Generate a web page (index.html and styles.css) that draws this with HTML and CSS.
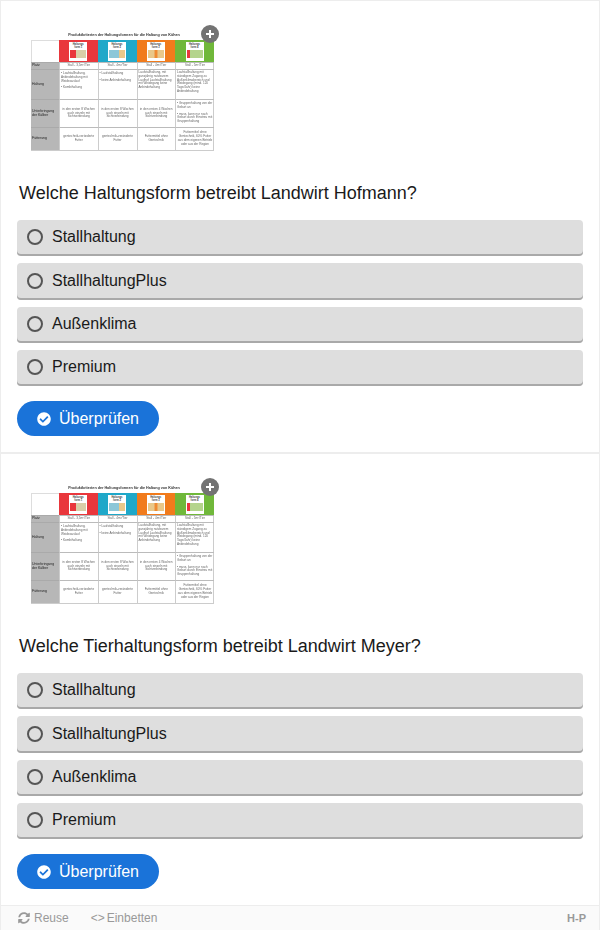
FILE: index.html
```html
<!DOCTYPE html>
<html lang="de">
<head>
    <meta charset="UTF-8">
    <title>Haltungsform Quiz</title>
    <link rel="stylesheet" href="styles.css">
</head>
<body>
    <div class="content">
        <div class="quiz">
            <div class="thumb">
                <div class="thumb-plus"><svg viewBox="0 0 10 10" width="10" height="10"><path d="M4 1h2v3h3v2H6v3H4V6H1V4h3z" fill="#fff"/></svg></div>
                <div class="thumb-title">Produktkriterien der Haltungsformen für die Haltung von Kühen</div>
                <div class="table">
                    <div class="cell head-blank"></div>
                    <div class="cell head red"><div class="logo"><b>Haltungs<br>form 1</b><i class="s1"></i></div></div>
                    <div class="cell head teal"><div class="logo"><b>Haltungs<br>form 2</b><i class="s2"></i></div></div>
                    <div class="cell head orange"><div class="logo"><b>Haltungs<br>form 3</b><i class="s3"></i></div></div>
                    <div class="cell head green"><div class="logo"><b>Haltungs<br>form 4</b><i class="s4"></i></div></div>

                    <div class="cell label">Platz</div>
                    <div class="cell mid">Stall - 3,5m²/Tier</div>
                    <div class="cell mid">Stall - 4m²/Tier</div>
                    <div class="cell mid">Stall - 4m²/Tier</div>
                    <div class="cell mid">Stall - 5m²/Tier</div>

                    <div class="cell label">Haltung</div>
                    <div class="cell"><p>• Laufstallhaltung, Anbindehaltung mit Weideauslauf</p><p>• Kombihaltung</p></div>
                    <div class="cell"><p>• Laufstallhaltung</p><p>• keine Anbindehaltung</p></div>
                    <div class="cell">Laufstallhaltung, mit ganzjährig nutzbarem Laufhof Laufstallhaltung mit Weidegang keine Anbindehaltung</div>
                    <div class="cell">Laufstallhaltung mit ständigem Zugang zu Außenklimabereich und Weidegang (mind. 120 Tage/Jahr) keine Anbindehaltung</div>

                    <div class="cell label">Unterbringung<br>der Kälber</div>
                    <div class="cell mid">in den ersten 8 Wochen auch einzeln mit Sichtverbindung</div>
                    <div class="cell mid">in den ersten 8 Wochen auch einzeln mit Sichtverbindung</div>
                    <div class="cell mid">in den ersten 4 Wochen auch einzeln mit Sichtverbindung</div>
                    <div class="cell"><p>• Gruppenhaltung von der Geburt an</p><p>• muss, kann nur nach Geburt durch Einstreu mit Gruppenhaltung</p></div>

                    <div class="cell label">Fütterung</div>
                    <div class="cell mid">gentechnik-veränderte Futter</div>
                    <div class="cell mid">gentechnik-veränderte Futter</div>
                    <div class="cell mid">Futtermittel ohne Gentechnik</div>
                    <div class="cell mid">Futtermittel ohne Gentechnik, 60% Futter aus dem eigenen Betrieb oder aus der Region</div>
                </div>
            </div>
            <div class="question">Welche Haltungsform betreibt Landwirt Hofmann?</div>
            <div class="answers">
                <div class="answer"><span class="radio"></span>Stallhaltung</div>
                <div class="answer"><span class="radio"></span>StallhaltungPlus</div>
                <div class="answer"><span class="radio"></span>Außenklima</div>
                <div class="answer"><span class="radio"></span>Premium</div>
            </div>
            <div class="check-btn">
                <svg class="check-icon" viewBox="0 0 512 512"><path d="M504 256c0 137-111 248-248 248S8 393 8 256 119 8 256 8s248 111 248 248zM227 387l184-184c6-6 6-16 0-23l-23-23c-6-6-16-6-23 0L216 307l-70-70c-6-6-16-6-23 0l-23 23c-6 6-6 16 0 23l104 104c7 6 17 6 23 0z" fill="#fff"/></svg>
                Überprüfen
            </div>
        </div>

        <div class="quiz">
            <div class="thumb">
                <div class="thumb-plus"><svg viewBox="0 0 10 10" width="10" height="10"><path d="M4 1h2v3h3v2H6v3H4V6H1V4h3z" fill="#fff"/></svg></div>
                <div class="thumb-title">Produktkriterien der Haltungsformen für die Haltung von Kühen</div>
                <div class="table">
                    <div class="cell head-blank"></div>
                    <div class="cell head red"><div class="logo"><b>Haltungs<br>form 1</b><i class="s1"></i></div></div>
                    <div class="cell head teal"><div class="logo"><b>Haltungs<br>form 2</b><i class="s2"></i></div></div>
                    <div class="cell head orange"><div class="logo"><b>Haltungs<br>form 3</b><i class="s3"></i></div></div>
                    <div class="cell head green"><div class="logo"><b>Haltungs<br>form 4</b><i class="s4"></i></div></div>

                    <div class="cell label">Platz</div>
                    <div class="cell mid">Stall - 3,5m²/Tier</div>
                    <div class="cell mid">Stall - 4m²/Tier</div>
                    <div class="cell mid">Stall - 4m²/Tier</div>
                    <div class="cell mid">Stall - 5m²/Tier</div>

                    <div class="cell label">Haltung</div>
                    <div class="cell"><p>• Laufstallhaltung, Anbindehaltung mit Weideauslauf</p><p>• Kombihaltung</p></div>
                    <div class="cell"><p>• Laufstallhaltung</p><p>• keine Anbindehaltung</p></div>
                    <div class="cell">Laufstallhaltung, mit ganzjährig nutzbarem Laufhof Laufstallhaltung mit Weidegang keine Anbindehaltung</div>
                    <div class="cell">Laufstallhaltung mit ständigem Zugang zu Außenklimabereich und Weidegang (mind. 120 Tage/Jahr) keine Anbindehaltung</div>

                    <div class="cell label">Unterbringung<br>der Kälber</div>
                    <div class="cell mid">in den ersten 8 Wochen auch einzeln mit Sichtverbindung</div>
                    <div class="cell mid">in den ersten 8 Wochen auch einzeln mit Sichtverbindung</div>
                    <div class="cell mid">in den ersten 4 Wochen auch einzeln mit Sichtverbindung</div>
                    <div class="cell"><p>• Gruppenhaltung von der Geburt an</p><p>• muss, kann nur nach Geburt durch Einstreu mit Gruppenhaltung</p></div>

                    <div class="cell label">Fütterung</div>
                    <div class="cell mid">gentechnik-veränderte Futter</div>
                    <div class="cell mid">gentechnik-veränderte Futter</div>
                    <div class="cell mid">Futtermittel ohne Gentechnik</div>
                    <div class="cell mid">Futtermittel ohne Gentechnik, 60% Futter aus dem eigenen Betrieb oder aus der Region</div>
                </div>
            </div>
            <div class="question">Welche Tierhaltungsform betreibt Landwirt Meyer?</div>
            <div class="answers">
                <div class="answer"><span class="radio"></span>Stallhaltung</div>
                <div class="answer"><span class="radio"></span>StallhaltungPlus</div>
                <div class="answer"><span class="radio"></span>Außenklima</div>
                <div class="answer"><span class="radio"></span>Premium</div>
            </div>
            <div class="check-btn">
                <svg class="check-icon" viewBox="0 0 512 512"><path d="M504 256c0 137-111 248-248 248S8 393 8 256 119 8 256 8s248 111 248 248zM227 387l184-184c6-6 6-16 0-23l-23-23c-6-6-16-6-23 0L216 307l-70-70c-6-6-16-6-23 0l-23 23c-6 6-6 16 0 23l104 104c7 6 17 6 23 0z" fill="#fff"/></svg>
                Überprüfen
            </div>
        </div>
    </div>

    <div class="footer">
        <div class="footer-links">
            <span class="footer-link">
                <svg class="reuse-icon" viewBox="0 0 512 512"><path d="M370 133c-31-29-71-45-114-45-77 0-143 53-161 126-1 5-6 9-12 9H26c-8 0-13-7-12-14C36 95 136 8 256 8c66 0 126 26 170 68l36-35c15-15 42-5 42 17v134c0 13-11 24-24 24H346c-22 0-32-26-17-41l41-42zM32 296h134c22 0 32 26 17 41l-41 42c31 29 71 45 114 45 77 0 143-53 161-126 1-5 6-9 12-9h57c8 0 13 7 12 14-22 114-122 201-242 201-66 0-126-26-170-68l-36 35c-15 15-42 5-42-17V320c0-13 11-24 24-24z" fill="#999"/></svg>
                Reuse
            </span>
            <span class="footer-link"><span class="code-icon">&lt;&gt;</span>Einbetten</span>
        </div>
        <span class="h5p-logo">H-P</span>
    </div>
</body>
</html>
```

FILE: styles.css
```css
* {
    margin: 0;
    padding: 0;
    box-sizing: border-box;
}
body {
    width: 600px;
    height: 930px;
    background-color: #fff;
    font-family: "Liberation Sans", Arial, sans-serif;
    color: #1a1a1a;
    overflow: hidden;
}
.content {
    border: 1px solid #ededed;
    border-bottom: none;
}
.quiz {
    height: 453px;
    padding: 29px 16px 0;
    border-bottom: 2px solid #ededed;
}
.quiz:last-child {
    height: 451px;
    border-bottom: none;
}

/* thumbnail of the table, blurred a bit because it is a scaled down image */
.thumb {
    width: 184px;
    height: 121px;
    margin-left: 14px;
    position: relative;
}
.thumb-plus {
    width: 18px;
    height: 18px;
    border-radius: 50%;
    background-color: #737373;
    position: absolute;
    top: -5px;
    right: -4px;
    display: flex;
    align-items: center;
    justify-content: center;
    z-index: 1;
}
.thumb-title {
    height: 10px;
    font-size: 3.7px;
    font-weight: bold;
    line-height: 10px;
    text-align: center;
    white-space: nowrap;
    color: #333;
    filter: blur(0.3px);
    padding-left: 2px;
}
.table {
    display: grid;
    grid-template-columns: 28px 38.5px 39px 38.5px 39px;
    grid-template-rows: 22px 7px 30px 28px 23px;
    width: 183px;
    border-right: 1px solid #ccc;
    border-bottom: 1px solid #ccc;
    filter: blur(0.35px);
}
.cell {
    font-size: 3.1px;
    line-height: 3.8px;
    color: #666;
    padding: 1px;
    border-left: 1px solid #ccc;
    border-top: 1px solid #bbb;
    overflow: hidden;
}
.cell p {
    margin: 1px 0 3px;
}
.mid {
    display: flex;
    align-items: center;
    justify-content: center;
    text-align: center;
}
.label {
    display: flex;
    align-items: center;
    background-color: #b7b7b7;
    color: #222;
    font-size: 3.5px;
    border-left: none;
    border-top: 1px solid #aaa;
}
.head-blank {
    border-top: 1px solid #ddd;
    border-left: 1px solid #ddd;
}
.head {
    border: none;
    display: flex;
    align-items: center;
    justify-content: center;
    padding: 0;
}
.red { background-color: #e9373c; }
.teal { background-color: #1fa8c9; }
.orange { background-color: #f17b1c; }
.green { background-color: #70b83a; }
.logo {
    width: 18px;
    height: 19px;
    background-color: #fff;
    font-size: 2.6px;
    line-height: 3px;
    text-align: center;
    color: #444;
    display: flex;
    flex-direction: column;
    justify-content: space-between;
    padding: 1px;
}
.logo i {
    display: block;
    height: 8px;
    margin-bottom: 2px;
}
.s1 { background: linear-gradient(90deg, #e9373c 35%, #d9cfa8 35%); }
.s2 { background: linear-gradient(90deg, #8cc7d8 60%, #e9c88a 60%); }
.s3 { background: linear-gradient(90deg, #e9c88a 35%, #f17b1c 50%, #e9c88a 65%); }
.s4 { background: linear-gradient(90deg, #e9373c 20%, #b4d48c 20%); }

.question {
    margin-top: 31px;
    padding-left: 2px;
    font-size: 18px;
    line-height: 22px;
}
.answers {
    margin-top: 16px;
    display: flex;
    flex-direction: column;
    gap: 6.9px;
}
.answer {
    height: 36.4px;
    display: flex;
    align-items: center;
    padding-left: 10px;
    padding-bottom: 1.8px;
    background-color: #dedede;
    border-radius: 4px;
    box-shadow: inset 0 -2px 0 #a9a9a9;
    font-size: 16px;
}
.radio {
    width: 16px;
    height: 16px;
    margin-right: 9px;
    border: 2px solid #555;
    border-radius: 50%;
    flex-shrink: 0;
}
.check-btn {
    width: 142px;
    height: 35px;
    margin-top: 15px;
    display: flex;
    align-items: center;
    justify-content: center;
    gap: 8px;
    background-color: #1a73d9;
    border-radius: 18px;
    color: #fff;
    font-size: 16px;
}
.check-icon {
    width: 14px;
    height: 14px;
}

.footer {
    height: 25px;
    display: flex;
    align-items: center;
    justify-content: space-between;
    padding: 0 13px 0 17px;
    background-color: #fafafa;
    border: 1px solid #ededed;
    border-bottom: none;
    font-size: 12px;
    color: #999;
}
.footer-links {
    display: flex;
    gap: 22px;
}
.footer-link {
    display: flex;
    align-items: center;
    gap: 4px;
}
.reuse-icon {
    width: 12px;
    height: 12px;
}
.code-icon {
    margin-right: -2px;
}
.h5p-logo {
    font-size: 11px;
    font-weight: bold;
    color: #999;
}
```
